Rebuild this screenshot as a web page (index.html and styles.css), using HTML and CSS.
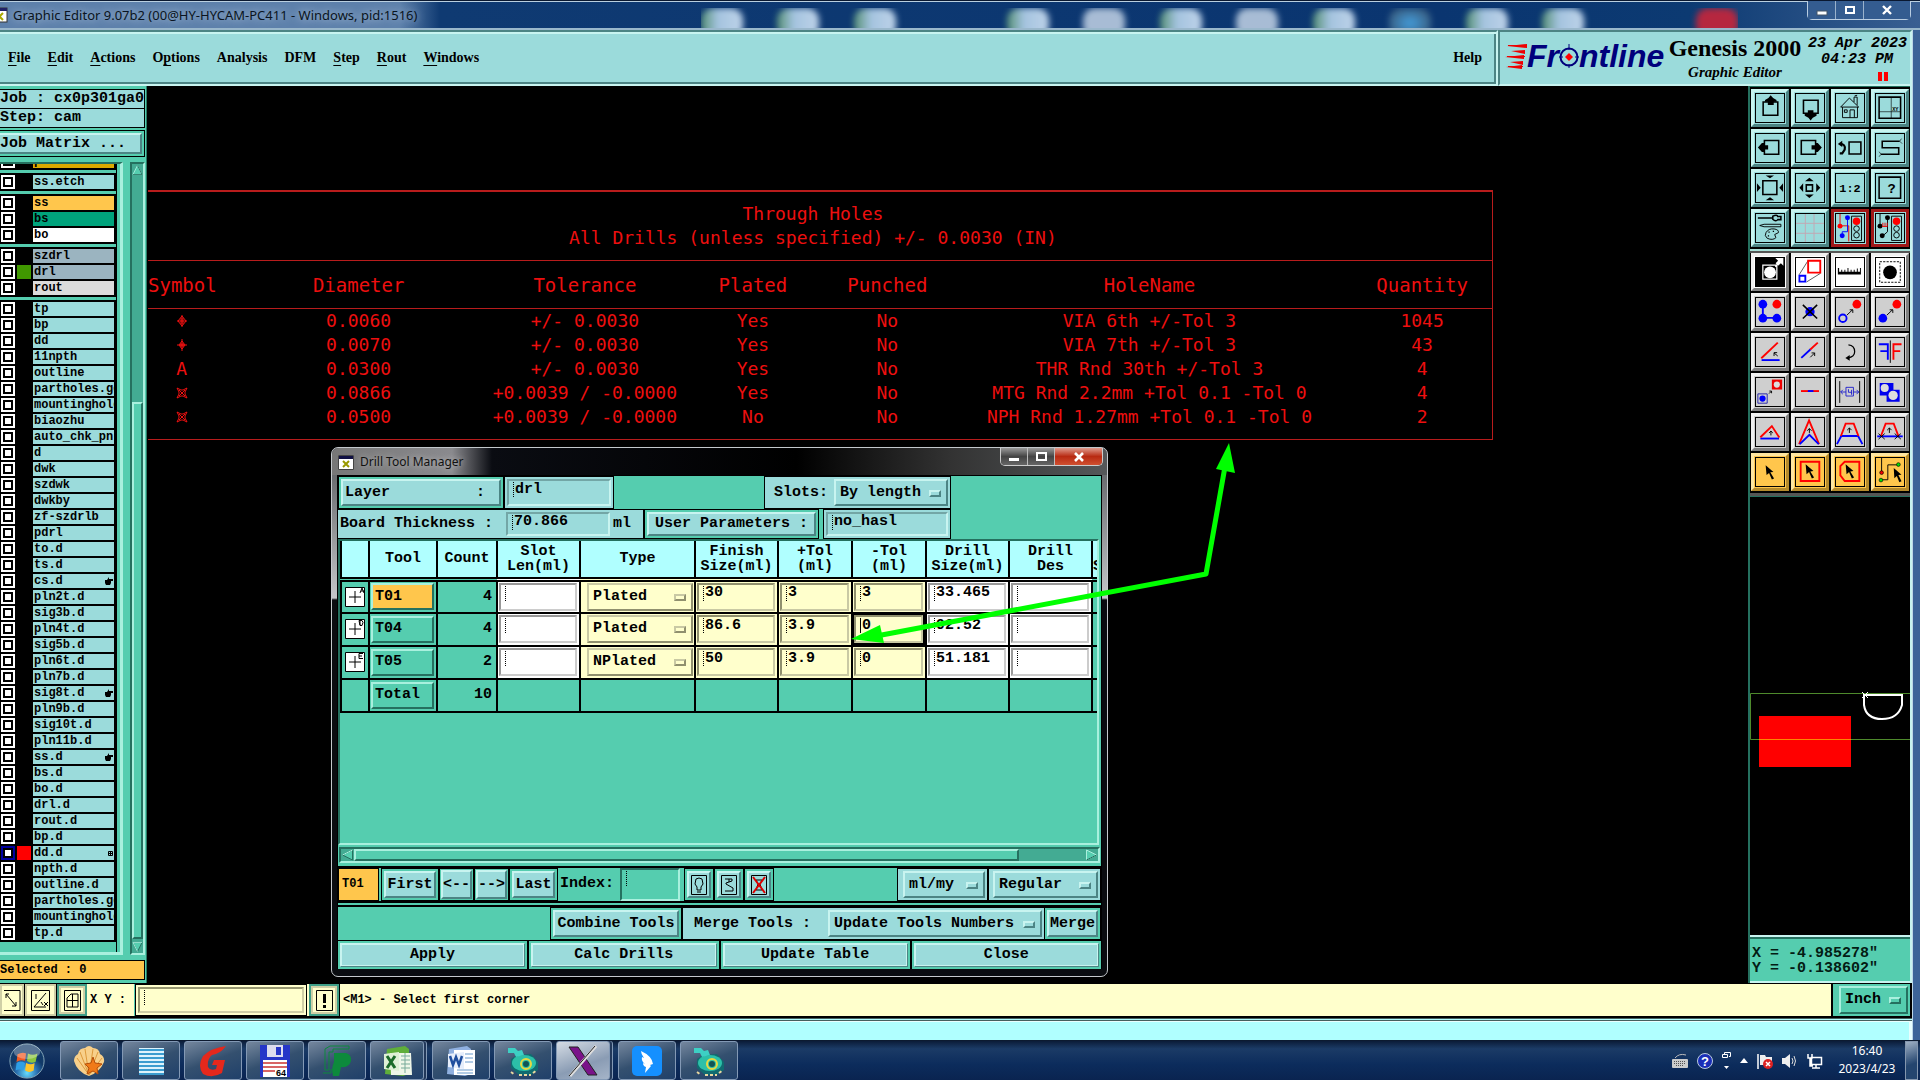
FILE: index.html
```html
<!DOCTYPE html>
<html lang="en">
<head>
<meta charset="utf-8">
<title>Graphic Editor 9.07b2</title>
<link rel="stylesheet" href="styles.css">
</head>
<body>
<header class="titlebar">
  <svg class="xicon" width="16" height="16" viewBox="0 0 16 16"><rect x="0" y="1" width="15" height="14" fill="#fff" stroke="#333"/><rect x="0" y="1" width="15" height="3" fill="#226"/><path d="M4 6l7 7M11 6l-7 7" stroke="#aa0" stroke-width="2"/></svg>
  <h1>Graphic Editor 9.07b2 (00@HY-HYCAM-PC411 - Windows, pid:1516)</h1>
  <div class="blobs"><i></i><i></i><i></i><i class="gap"></i><i></i><i class="doc"></i><i></i><i class="doc"></i><i></i><i class="pic"></i><i></i><i></i><i class="gap"></i><i class="red"></i></div>
  <div class="winbtns">
    <button aria-label="Minimize"><svg width="12" height="12"><rect x="1" y="7" width="10" height="4" fill="#fff" stroke="#456"/></svg></button>
    <button aria-label="Maximize"><svg width="12" height="12"><rect x="2" y="3" width="8" height="6" fill="none" stroke="#fff" stroke-width="2"/></svg></button>
    <button class="wide" aria-label="Close"><svg width="12" height="12"><path d="M2 2l8 8M10 2l-8 8" stroke="#fff" stroke-width="2.4"/></svg></button>
  </div>
</header>

<div class="window">
  <div class="top">
    <nav class="menubar">
      <a href="#"><u>F</u>ile</a><a href="#"><u>E</u>dit</a><a href="#"><u>A</u>ctions</a><a href="#">O<u>p</u>tions</a><a href="#">Analysis</a><a href="#">DFM</a><a href="#"><u>S</u>tep</a><a href="#"><u>R</u>out</a><a href="#"><u>W</u>indows</a><a href="#" class="help">Help</a>
    </nav>
    <div class="brand">
      <div class="logo">
        <svg width="22" height="26" viewBox="0 0 22 26"><g fill="#e00"><path d="M2 3L22 1v4zM6 8L20 7v4zM0 14L19 12v4zM5 19L18 18v4zM1 24L17 22v4z"/><path d="M3 2h19v1H3zM2 13h18v1H2zM3 23h15v1H3z"/></g></svg>
        <span>Fr<svg width="20" height="24" viewBox="0 0 20 24"><circle cx="10" cy="13" r="8.500" fill="none" stroke="#00007c" stroke-width="2"/><path d="M10 0v6M10 20v4M0 13h4M16 13h4" stroke="#00007c"/><path d="M10 9l4 4-4 4-4-4z" fill="#f00"/></svg>ntline</span>
      </div>
      <div class="product"><b>Genesis 2000</b><i>Graphic Editor</i></div>
      <div class="date"><span>23 Apr 2023</span><span>04:23 PM</span><svg width="10" height="9"><path d="M0 0h4v9H0zM6 0h4v9H6z" fill="#f00"/></svg></div>
    </div>
  </div>

  <main class="main">
    <aside class="side">
      <div class="jobbox"><p>Job : cx0p301ga0</p><p>Step: cam</p></div>
      <div class="jobmatrix"><button>Job Matrix ...</button></div>
      <div class="layerpane">
        <div class="layers">
          <ul><li><label><input type="checkbox"><i></i><span class="gold">pln.lib</span></label></li></ul>
          <ul><li><label><input type="checkbox"><i></i><span>ss.etch</span></label></li></ul>
          <ul>
            <li><label><input type="checkbox"><i></i><span class="orange">ss</span></label></li>
            <li><label><input type="checkbox"><i></i><span class="green">bs</span></label></li>
            <li><label><input type="checkbox"><i></i><span class="white">bo</span></label></li>
          </ul>
          <ul>
            <li><label><input type="checkbox"><i></i><span class="steel">szdrl</span></label></li>
            <li><label><input type="checkbox"><i class="on-green"></i><span class="steel">drl</span></label></li>
            <li><label><input type="checkbox"><i></i><span class="silver">rout</span></label></li>
          </ul>
          <ul>
            <li><label><input type="checkbox"><i></i><span>tp</span></label></li>
            <li><label><input type="checkbox"><i></i><span>bp</span></label></li>
            <li><label><input type="checkbox"><i></i><span>dd</span></label></li>
            <li><label><input type="checkbox"><i></i><span>11npth</span></label></li>
            <li><label><input type="checkbox"><i></i><span>outline</span></label></li>
            <li><label><input type="checkbox"><i></i><span>partholes.ge</span></label></li>
            <li><label><input type="checkbox"><i></i><span>mountinghole</span></label></li>
            <li><label><input type="checkbox"><i></i><span>biaozhu</span></label></li>
            <li><label><input type="checkbox"><i></i><span>auto_chk_pnl</span></label></li>
            <li><label><input type="checkbox"><i></i><span>d</span></label></li>
            <li><label><input type="checkbox"><i></i><span>dwk</span></label></li>
            <li><label><input type="checkbox"><i></i><span>szdwk</span></label></li>
            <li><label><input type="checkbox"><i></i><span>dwkby</span></label></li>
            <li><label><input type="checkbox"><i></i><span>zf-szdrlb</span></label></li>
            <li><label><input type="checkbox"><i></i><span>pdrl</span></label></li>
            <li><label><input type="checkbox"><i></i><span>to.d</span></label></li>
            <li><label><input type="checkbox"><i></i><span>ts.d</span></label></li>
            <li><label><input type="checkbox"><i></i><span>cs.d<svg class="hand" viewBox="0 0 8 8"><path d="M0 3h2l2-3v2h4v2H6v2L5 8H1L0 6z"/></svg></span></label></li>
            <li><label><input type="checkbox"><i></i><span>pln2t.d</span></label></li>
            <li><label><input type="checkbox"><i></i><span>sig3b.d</span></label></li>
            <li><label><input type="checkbox"><i></i><span>pln4t.d</span></label></li>
            <li><label><input type="checkbox"><i></i><span>sig5b.d</span></label></li>
            <li><label><input type="checkbox"><i></i><span>pln6t.d</span></label></li>
            <li><label><input type="checkbox"><i></i><span>pln7b.d</span></label></li>
            <li><label><input type="checkbox"><i></i><span>sig8t.d<svg class="hand" viewBox="0 0 8 8"><path d="M0 3h2l2-3v2h4v2H6v2L5 8H1L0 6z"/></svg></span></label></li>
            <li><label><input type="checkbox"><i></i><span>pln9b.d</span></label></li>
            <li><label><input type="checkbox"><i></i><span>sig10t.d</span></label></li>
            <li><label><input type="checkbox"><i></i><span>pln11b.d</span></label></li>
            <li><label><input type="checkbox"><i></i><span>ss.d<svg class="hand" viewBox="0 0 8 8"><path d="M0 3h2l2-3v2h4v2H6v2L5 8H1L0 6z"/></svg></span></label></li>
            <li><label><input type="checkbox"><i></i><span>bs.d</span></label></li>
            <li><label><input type="checkbox"><i></i><span>bo.d</span></label></li>
            <li><label><input type="checkbox"><i></i><span>drl.d</span></label></li>
            <li><label><input type="checkbox"><i></i><span>rout.d</span></label></li>
            <li><label><input type="checkbox"><i></i><span>bp.d</span></label></li>
            <li><label><input type="checkbox" checked><i class="on-red"></i><span>dd.d<svg class="grid5" viewBox="0 0 5 5"><path d="M.5.5h4v4h-4zM2.500 0v5M0 2.500h5" fill="none" stroke="#000"/></svg></span></label></li>
            <li><label><input type="checkbox"><i></i><span>npth.d</span></label></li>
            <li><label><input type="checkbox"><i></i><span>outline.d</span></label></li>
            <li><label><input type="checkbox"><i></i><span>partholes.ge</span></label></li>
            <li><label><input type="checkbox"><i></i><span>mountinghole</span></label></li>
            <li><label><input type="checkbox"><i></i><span>tp.d</span></label></li>
          </ul>
        </div>
        <div class="vscroll">
          <svg viewBox="0 0 12 12"><path d="M6 1l5 10H1z" fill="#55cdaf" stroke="#a9f0de"/><path d="M6 1l5 10H1" fill="none" stroke="#25705f"/></svg>
          <div class="vthumb"></div>
          <svg viewBox="0 0 12 12"><path d="M1 1h10L6 11z" fill="#55cdaf" stroke="#25705f"/><path d="M11 1H1l5 10" fill="none" stroke="#a9f0de"/></svg>
        </div>
      </div>
      <p class="selected">Selected : 0</p>
    </aside>

    <section class="canvas">
      <table class="drills">
        <colgroup><col class="c1"><col class="c2"><col class="c3"><col class="c4"><col class="c5"><col class="c6"><col class="c7"></colgroup>
        <caption>Through Holes<br>All Drills (unless specified) +/- 0.0030 (IN)</caption>
        <thead><tr><th>Symbol</th><th>Diameter</th><th>Tolerance</th><th>Plated</th><th>Punched</th><th>HoleName</th><th>Quantity</th></tr></thead>
        <tbody>
          <tr><td><svg class="sym" viewBox="0 0 12 12"><path d="M6 0v12M1 6h10M6 1L2 6l4 5 4-5zM5 3v6M7 3v6"/></svg></td><td>0.0060</td><td>+/- 0.0030</td><td>Yes</td><td>No</td><td>VIA 6th +/-Tol 3</td><td>1045</td></tr>
          <tr><td><svg class="sym" viewBox="0 0 12 12"><path d="M6 0v12M1 6h10M6 2L3 6l3 4 3-4zM4 6h4M5 4v4M7 4v4"/></svg></td><td>0.0070</td><td>+/- 0.0030</td><td>Yes</td><td>No</td><td>VIA 7th +/-Tol 3</td><td>43</td></tr>
          <tr><td>A</td><td>0.0300</td><td>+/- 0.0030</td><td>Yes</td><td>No</td><td>THR Rnd 30th +/-Tol 3</td><td>4</td></tr>
          <tr><td><svg class="sym" viewBox="0 0 12 12"><path d="M1 1l4 2h2l4-2-2 4v2l2 4-4-2H5l-4 2 2-4V5zM3 3l6 6M9 3L3 9"/></svg></td><td>0.0866</td><td>+0.0039 / -0.0000</td><td>Yes</td><td>No</td><td>MTG Rnd 2.2mm +Tol 0.1 -Tol 0</td><td>4</td></tr>
          <tr><td><svg class="sym" viewBox="0 0 12 12"><path d="M1 1l4 2h2l4-2-2 4v2l2 4-4-2H5l-4 2 2-4V5zM3 3l6 6M9 3L3 9"/></svg></td><td>0.0500</td><td>+0.0039 / -0.0000</td><td>No</td><td>No</td><td>NPH Rnd 1.27mm +Tol 0.1 -Tol 0</td><td>2</td></tr>
        </tbody>
      </table>

      <div class="dialog">
        <div class="dtitle">
          <svg width="16" height="16" viewBox="0 0 16 16"><path d="M.5 1.500h15v14H.5z" fill="#fff" stroke="#444"/><path d="M1 2h14v3H1z" fill="#114"/><path d="M5 7l6 6M11 7l-6 6" stroke="#990" stroke-width="2"/></svg>
          <h2>Drill Tool Manager</h2>
          <div class="dbtns">
            <button aria-label="Minimize"><svg width="12" height="12"><rect x="1" y="7" width="10" height="3" fill="#fff"/></svg></button>
            <button aria-label="Maximize"><svg width="12" height="12"><rect x="2" y="2" width="9" height="7" fill="none" stroke="#fff" stroke-width="2"/></svg></button>
            <button class="close" aria-label="Close"><svg width="12" height="12"><path d="M2 2l8 8M10 2l-8 8" stroke="#fff" stroke-width="2.600"/></svg></button>
          </div>
        </div>
        <div class="dbody">
          <div class="row r1">
            <div class="box gbox layerbox"><button class="btn spread"><span>Layer</span><span>:</span></button></div>
            <div class="box"><input class="field w104" aria-label="Layer" value="drl"></div>
            <div class="box slots"><label for="slots">Slots:</label><span class="opt w114"><select id="slots"><option>By length</option></select></span></div>
          </div>
          <div class="row r2">
            <div class="box thick"><label for="bt">Board Thickness :</label><input id="bt" class="field w104" value="70.866"><span>ml</span></div>
            <div class="box gbox userbox"><button class="btn">User Parameters :</button></div>
            <div class="box"><input class="field w122" aria-label="User Parameters" value="no_hasl"></div>
          </div>
          <div class="view">
            <table class="tools">
              <colgroup><col class="t0"><col class="t1"><col class="t2"><col class="t3"><col class="t4"><col class="t3"><col class="t6"><col class="t6"><col class="t3"><col class="t3"><col class="t2"></colgroup>
              <thead><tr><th></th><th>Tool</th><th>Count</th><th>Slot<br>Len(ml)</th><th>Type</th><th>Finish<br>Size(ml)</th><th>+Tol<br>(ml)</th><th>-Tol<br>(ml)</th><th>Drill<br>Size(ml)</th><th>Drill<br>Des</th><th class="cut"><br>S</th></tr></thead>
              <tbody>
                <tr><td><svg class="plus" viewBox="0 0 20 20"><path d="M.5.500h19v19H.5z"/><path d="M10 4v12M4 10h12"/><path d="M15 6l2-5 2 5M16 4h3"/></svg></td><td><button class="tool cur">T01</button></td><td class="num">4</td><td class="w"><input class="cell" aria-label="Slot length T01"></td><td class="y"><span class="opt"><select aria-label="Type T01"><option>Plated</option></select></span></td><td class="y"><input class="cell" aria-label="Finish size T01" value="30"></td><td class="y"><input class="cell" aria-label="+Tol T01" value="3"></td><td class="y"><input class="cell" aria-label="-Tol T01" value="3"></td><td class="w"><input class="cell" aria-label="Drill size T01" value="33.465"></td><td class="w"><input class="cell" aria-label="Drill designation T01"></td><td></td></tr>
                <tr><td><svg class="plus" viewBox="0 0 20 20"><path d="M.5.500h19v19H.5z"/><path d="M10 4v12M4 10h12"/><path d="M14 1.500h3l1 2-1 3h-2zM15 1v5"/></svg></td><td><button class="tool">T04</button></td><td class="num">4</td><td class="w"><input class="cell" aria-label="Slot length T04"></td><td class="y"><span class="opt"><select aria-label="Type T04"><option>Plated</option></select></span></td><td class="y"><input class="cell" aria-label="Finish size T04" value="86.6"></td><td class="y"><input class="cell" aria-label="+Tol T04" value="3.9"></td><td class="y focus"><input class="cell" aria-label="-Tol T04" value="0"></td><td class="w"><input class="cell" aria-label="Drill size T04" value="92.52"></td><td class="w"><input class="cell" aria-label="Drill designation T04"></td><td></td></tr>
                <tr><td><svg class="plus" viewBox="0 0 20 20"><path d="M.5.500h19v19H.5z"/><path d="M10 4v12M4 10h12"/><path d="M18 1.500h-4v5h4M14 4h3"/></svg></td><td><button class="tool">T05</button></td><td class="num">2</td><td class="w"><input class="cell" aria-label="Slot length T05"></td><td class="y"><span class="opt"><select aria-label="Type T05"><option>NPlated</option></select></span></td><td class="y"><input class="cell" aria-label="Finish size T05" value="50"></td><td class="y"><input class="cell" aria-label="+Tol T05" value="3.9"></td><td class="y"><input class="cell" aria-label="-Tol T05" value="0"></td><td class="w"><input class="cell" aria-label="Drill size T05" value="51.181"></td><td class="w"><input class="cell" aria-label="Drill designation T05"></td><td></td></tr>
                <tr><td></td><td><button class="tool">Total</button></td><td class="num">10</td><td></td><td></td><td></td><td></td><td></td><td></td><td></td><td></td></tr>
              </tbody>
            </table>
          </div>
          <div class="hscroll">
            <svg viewBox="0 0 12 12"><path d="M11 1v10L1 6z" fill="#55cdaf" stroke="#25705f"/><path d="M11 1L1 6" stroke="#a9f0de"/></svg>
            <div class="htrack"><div class="hthumb"></div></div>
            <svg viewBox="0 0 12 12"><path d="M1 1v10l10-5z" fill="#55cdaf" stroke="#a9f0de"/><path d="M1 11l10-5" stroke="#25705f"/></svg>
          </div>
          <div class="row r3">
            <span class="current">T01</span>
            <div class="box gbox n58"><button class="btn">First</button></div>
            <div class="box gbox n35"><button class="btn">&lt;--</button></div>
            <div class="box gbox n35"><button class="btn">--&gt;</button></div>
            <div class="box gbox n49"><button class="btn">Last</button></div>
            <label for="idx">Index:</label><input id="idx" class="field gfield">
            <div class="box gbox ico"><button class="btn" aria-label="Show"><svg viewBox="0 0 16 20"><path d="M.5.500h15v19H.5zM6 15v-3L4 9l1-5 3-1 3 1 1 5-2 3v3zM6 17h4" fill="none" stroke="#000"/></svg></button></div>
            <div class="box gbox ico"><button class="btn" aria-label="Select"><svg viewBox="0 0 16 20"><path d="M.5.500h15v19H.5zM4 4h7v2L5 8v1l7 4v3H4M8 4v3" fill="none" stroke="#000"/></svg></button></div>
            <div class="box gbox ico"><button class="btn" aria-label="Clear"><svg viewBox="0 0 16 20"><path d="M.5.500h15v19H.5zM5 5h6l-2 4 2 6H5l2-6z" fill="none" stroke="#000"/><path d="M2 2l12 16M14 2L2 18" stroke="#d00" stroke-width="2"/></svg></button></div>
            <div class="box push"><span class="opt w82"><select aria-label="Units"><option>ml/my</option></select></span></div>
            <div class="box reg"><span class="opt"><select aria-label="Mode"><option>Regular</option></select></span></div>
          </div>
          <div class="row r4">
            <div class="box gbox combine"><button class="btn">Combine Tools</button></div>
            <div class="box merge"><label for="mt">Merge Tools :</label><span class="opt w214"><select id="mt"><option>Update Tools Numbers</option></select></span></div>
            <div class="box gbox last"><button class="btn">Merge</button></div>
          </div>
          <div class="row r5">
            <button class="btn">Apply</button><button class="btn">Calc Drills</button><button class="btn">Update Table</button><button class="btn">Close</button>
          </div>
        </div>
      </div>

      <svg class="arrow"><path d="M1079 375L1059 488L724 551" fill="none" stroke="#0f0" stroke-width="5" stroke-linejoin="round"/><path d="M1082 357l6 30-19-4zM704 553l29-14 4 18z" fill="#0f0"/></svg>
    </section>

    <aside class="panel">
      <div class="group teal">
        <button aria-label="Pan up"><svg viewBox="0 0 90 90"><path d="M23 26h47v42H23z" class="k5"/><path d="M47 4l8 9 11 6v6h-9v10H38V25h-9v-6l11-6z"/></svg></button>
        <button aria-label="Pan down"><svg viewBox="0 0 90 90"><path d="M24 20h47v42H24z" class="k5"/><path d="M38 52h18v12h10v6l-12 6-7 9-7-9-12-6v-6h10z"/></svg></button>
        <button aria-label="Home"><svg viewBox="0 0 90 90"><path d="M15 42l28-29 30 29zM21 42v34h48V42M45 76V51h14v25M27 51h9v8h-9zM58 26V10h10v25M60 6l8-2" class="k3"/></svg></button>
        <button aria-label="Window"><svg viewBox="0 0 90 90"><path d="M10 10h69v68H10z" class="k5"/><path d="M49 10v68M10 57h69" class="k2"/><text x="52" y="54" font-size="17">XY</text></svg></button>
        <button aria-label="Pan left"><svg viewBox="0 0 90 90"><path d="M27 21h46v44H27z" class="k5"/><path d="M6 43l13-14h8v7h12v14H27v8h-8z"/></svg></button>
        <button aria-label="Pan right"><svg viewBox="0 0 90 90"><path d="M17 21h46v44H17z" class="k5"/><path d="M83 43L70 29h-7v7H50v14h13v8h7z"/></svg></button>
        <button aria-label="Previous view"><svg viewBox="0 0 90 90"><path d="M42 26h38v38H42z" class="k5"/><path d="M12 32q20 0 16 18l-8 12h-8" fill="none" stroke="#000" stroke-width="7"/><path d="M6 32l14-10v20z"/></svg></button>
        <button aria-label="Serpent"><svg viewBox="0 0 90 90"><path d="M76 23H20v21h53v21H16" class="k5"/><path d="M76 23l6-8M76 23l8 8M16 65l-6-8M16 65l-6 8" class="k2"/></svg></button>
        <button aria-label="Zoom out"><svg viewBox="0 0 90 90"><path d="M22 22h45v44H22z" class="k5"/><path d="M31 5h27L45 14zM31 84h27l-13-9zM3 30l12 14L3 58zM87 30L75 44l12 14z"/></svg></button>
        <button aria-label="Zoom in"><svg viewBox="0 0 90 90"><path d="M33 35h20v20H33z" class="k5"/><path d="M29 23h28l-14-11zM29 66h28L43 77zM23 30v28L11 44zM65 30v28l13-14z"/></svg></button>
        <button aria-label="Scale 1:2"><svg viewBox="0 0 90 90"><text x="45" y="58" font-size="38" text-anchor="middle">1:2</text></svg></button>
        <button aria-label="Help"><svg viewBox="0 0 90 90"><path d="M10 10h69v68H10z" class="k5"/><text x="50" y="61" font-size="44" text-anchor="middle">?</text></svg></button>
        <button aria-label="Tools"><svg viewBox="0 0 90 90"><path d="M6 13h48M54 7q14-6 16 1h10v10H70q-6 8-16-1z" class="k5"/><path d="M12 37l14-4h54v8H26zM32 60q8-14 26-12 16 2 14 12l-12 6 4 10q-10 10-28 2-10-8-4-18z" class="k3"/><path d="M40 56h4v4h-4zM54 54h4v4h-4zM38 68h4v4h-4z"/></svg></button>
        <button aria-label="Grid"><svg viewBox="0 0 90 90"><path d="M30 0v90M58 0v90M0 30h90M0 62h90" fill="none" stroke="#c4a6b2" stroke-width="3"/></svg></button>
        <button class="redf" aria-label="Snap"><svg viewBox="0 0 90 90"><path d="M13 0v38h28v50" fill="none" stroke="#e00" stroke-width="3"/><path d="M37 12v45H20v15" fill="none" stroke="#00f" stroke-width="3"/><circle cx="13" cy="39" r="8" fill="#f00"/><circle cx="37" cy="12" r="8" fill="#00f"/><circle cx="20" cy="70" r="8" fill="#00f"/><path d="M50 7h32v78H50z" class="k3"/><circle cx="66" cy="23" r="12" fill="#f00"/><circle cx="66" cy="47" r="9" class="k3"/><circle cx="66" cy="68" r="9" class="k3"/></svg></button>
        <button class="redf" aria-label="Snap off"><svg viewBox="0 0 90 90"><path d="M13 0v38M37 12v45L20 72" class="k3"/><circle cx="13" cy="39" r="8"/><circle cx="37" cy="12" r="8"/><circle cx="20" cy="70" r="8"/><path d="M20 40h16M22 28v12M29 28v12M36 28v12" stroke="#e00" stroke-width="3"/><path d="M50 7h32v78H50z" class="k3"/><circle cx="66" cy="23" r="12" fill="#f00"/><circle cx="66" cy="47" r="9" class="k3"/><circle cx="66" cy="68" r="9" class="k3"/></svg></button>
      </div>
      <div class="group gray">
        <button class="wh" aria-label="Add"><svg viewBox="0 0 90 90"><path d="M0 0h90v90H0z"/><circle cx="45" cy="46" r="19" fill="#fff"/><path d="M22 23h45v45H22zM62 28L80 8" fill="none" stroke="#fff" stroke-width="4"/><path d="M88 0H62l9 9-8 8 8 8 9-8 8 8z" fill="#fff"/></svg></button>
        <button class="wh" aria-label="Copy scale"><svg viewBox="0 0 90 90"><path d="M10 54L39 8M34 77l45-28" class="k2"/><path d="M39 9h39v38H39z" class="red5"/><path d="M11 57h19v19H11z" class="b5"/></svg></button>
        <button class="wh" aria-label="Measure"><svg viewBox="0 0 90 90"><path d="M6 32h4v12h7v-6h3v6h7v-6h3v6h7V32h3v12h7v-6h3v6h7v-6h3v6h7V34h3v10h7V32h3v21H6z"/></svg></button>
        <button class="wh" aria-label="Select feature"><svg viewBox="0 0 90 90"><path d="M12 12h66v66H12z" class="k3" stroke-dasharray="7 4"/><circle cx="45" cy="46" r="22"/></svg></button>
        <button aria-label="Nets"><svg viewBox="0 0 90 90"><path d="M22 20v44h45" class="b5"/><g fill="#00f"><circle cx="22" cy="20" r="14"/><circle cx="22" cy="65" r="14"/><circle cx="67" cy="65" r="14"/></g><circle cx="67" cy="20" r="14" fill="#f00"/></svg></button>
        <button aria-label="Delete"><svg viewBox="0 0 90 90"><circle cx="45" cy="44" r="15" fill="#00f"/><path d="M22 22l46 44M68 22L22 66" class="k5"/></svg></button>
        <button aria-label="Move to"><svg viewBox="0 0 90 90"><circle cx="22" cy="65" r="12" class="b5"/><circle cx="67" cy="20" r="14" fill="#f00"/><path d="M35 55l18-17M44 38h10v10" class="k3"/></svg></button>
        <button aria-label="Copy to"><svg viewBox="0 0 90 90"><circle cx="22" cy="65" r="14" fill="#00f"/><circle cx="67" cy="20" r="14" fill="#f00"/><path d="M35 55l18-17M44 38h10v10" class="k3"/></svg></button>
        <button aria-label="Rotate line"><svg viewBox="0 0 90 90"><path d="M18 71h58" class="b5"/><path d="M17 65l53-50" class="red5"/><path d="M70 58L58 48M58 58V47h10" class="k3"/></svg></button>
        <button aria-label="Extend line"><svg viewBox="0 0 90 90"><path d="M17 64l30-28" class="b5"/><path d="M46 37l24-22" class="red5"/><path d="M46 62l14-14M50 48h10v10" class="k3"/></svg></button>
        <button aria-label="Rotate"><svg viewBox="0 0 90 90"><path d="M40 22q20 2 20 22 0 16-22 20" class="k4"/><path d="M30 64l14-9v18z"/></svg></button>
        <button aria-label="Mirror"><svg viewBox="0 0 90 90"><path d="M9 20h29v50M14 42h24" class="b5"/><path d="M82 20H56v50M56 42h22" class="red5"/><path d="M46 8v72" class="k3"/></svg></button>
        <button aria-label="Transform"><svg viewBox="0 0 90 90"><path d="M6 51h30v30H6z" fill="none" stroke="#22a" stroke-width="3"/><circle cx="21" cy="66" r="10" fill="#00f"/><path d="M51 5h33v32H51z" fill="#e00"/><circle cx="67" cy="21" r="10" fill="#ddd"/><path d="M42 50l7-7M43 42h7v7" class="k3"/></svg></button>
        <button aria-label="Join"><svg viewBox="0 0 90 90"><path d="M16 42h58" class="red5"/><path d="M38 42h18" class="b5"/></svg></button>
        <button aria-label="Spacing"><svg viewBox="0 0 90 90"><path d="M12 10v70M76 10v70" class="k3"/><path d="M32 30h24v28H32zM15 45h17M56 45h17M22 38l-7 7 7 7M66 38l7 7-7 7M40 36v10h10v8M50 38v12" fill="none" stroke="#22c" stroke-width="3"/></svg></button>
        <button aria-label="Merge shapes"><svg viewBox="0 0 90 90"><path d="M12 16h44v22h20v38H34V56H12z" fill="#00e"/><circle cx="28" cy="32" r="13" fill="#ddd"/><circle cx="55" cy="56" r="15" fill="#ddd"/></svg></button>
        <button aria-label="Corner"><svg viewBox="0 0 90 90"><path d="M14 66h60" class="b5"/><path d="M14 62l37-36 24 37" class="red5"/><path d="M48 56V42M42 48l6-6 6 6" class="k3"/></svg></button>
        <button aria-label="Stretch corner"><svg viewBox="0 0 90 90"><path d="M10 84L42 8l32 76" class="red5"/><path d="M12 84l31-30 30 30" class="b5"/><path d="M43 48V34M36 41l7-7 7 7" class="k3"/></svg></button>
        <button aria-label="Stretch edge"><svg viewBox="0 0 90 90"><path d="M3 84l14-26h54l14 26" class="b5"/><path d="M16 58l15-40h26l15 40" class="red5"/><path d="M43 48V32M36 39l7-7 7 7" class="k3"/></svg></button>
        <button aria-label="Cut edge"><svg viewBox="0 0 90 90"><path d="M4 59h82" class="b5"/><path d="M16 58l15-40h26l15 40" class="red5"/><path d="M43 48V32M36 39l7-7 7 7M8 50l20 18M28 50L8 68M60 50l20 18M80 50L60 68" class="k3"/></svg></button>
        <button class="or" aria-label="Select"><svg viewBox="0 0 90 90"><path d="M31 23l25 22-10 1 12 20-7 3-9-21-8 7z"/></svg></button>
        <button class="or" aria-label="Frame select"><svg viewBox="0 0 90 90"><path d="M15 12h60v62H15z" class="red5"/><path d="M31 20l25 22-10 1 12 20-7 3-9-21-8 7z"/></svg></button>
        <button class="or" aria-label="Polygon select"><svg viewBox="0 0 90 90"><path d="M28 12h47v62H28L14 56V26z" class="red5"/><path d="M31 20l25 22-10 1 12 20-7 3-9-21-8 7z"/></svg></button>
        <button class="or" aria-label="Net select"><svg viewBox="0 0 90 90"><path d="M18 0v46M16 70h22V22h34" class="k3"/><circle cx="18" cy="47" r="6" fill="#e00" stroke="#000" stroke-width="2"/><circle cx="16" cy="71" r="6" fill="#0d0" stroke="#000" stroke-width="2"/><circle cx="72" cy="21" r="6" fill="#0d0" stroke="#000" stroke-width="2"/><path d="M57 32l25 22-10 1 10 20-7 3-8-20-8 7z"/></svg></button>
      </div>
      <div class="minimap"><svg><path d="M9 219h92v51H9z" fill="#f00"/><path d="M160 196.500H.5v46H160" fill="none" stroke="#4e8a2c"/><path d="M9 242.500h92" stroke="#f80"/><path d="M114 198h38v10q-4 14-20 14t-18-14z" fill="none" stroke="#fff" stroke-width="2"/><path d="M112 195l6 6M118 195l-6 6" stroke="#fff"/></svg></div>
      <div class="coords"><p>X = -4.985278"</p><p>Y = -0.138602"</p></div>
    </aside>
  </main>

  <div class="status">
    <button class="sb" aria-label="Diagonal"><svg viewBox="0 0 17 21"><path d="M-2 .5h18v20H-2M2 4l10 12M2 8V4h3M8 16h4v-4" fill="none" stroke="#000"/></svg></button>
    <button class="sb s2" aria-label="Angle"><svg viewBox="0 0 19 21"><path d="M.5.500h18v20H.5zM3 17L15 3M3 17h12M5 4v5M10 12l2 3M13 12l4 4M17 12l-4 4" fill="none" stroke="#000"/></svg></button>
    <button class="sb sg" aria-label="Grid"><svg viewBox="0 0 17 21"><path d="M.5.500h16v20H.5zM3 8l4-4h7v13H3zM8.500 4v13M3 10.500h11" fill="none" stroke="#000"/></svg></button>
    <label for="xy">X Y :</label>
    <div class="xybox"><input id="xy" class="field"></div>
    <button class="sb sg" aria-label="Alert"><svg viewBox="0 0 17 21"><path d="M.5.500h16v20H.5z" fill="none" stroke="#000"/><path d="M7 4h3v9H7zM7 15h3v3H7z"/></svg></button>
    <p class="msg">&lt;M1&gt; - Select first corner</p>
    <div class="units"><span class="opt"><select aria-label="Units"><option>Inch</option></select></span></div>
  </div>
  <div class="foot"></div>
</div>

<footer class="taskbar">
  <button class="start" aria-label="Start"><svg viewBox="0 0 40 40"><defs><radialGradient id="orb" cy=".85"><stop offset="0" stop-color="#6df"/><stop offset=".6" stop-color="#2a6fb0"/><stop offset="1" stop-color="#123a68"/></radialGradient></defs><circle cx="20" cy="20" r="18" fill="url(#orb)" stroke="#8ab"/><path d="M10 13q5-3 9-1l-1 8q-5-2-9 1z" fill="#f25a22"/><path d="M21 12q5 3 10 0l-2 9q-5 2-9-1z" fill="#8cc63f"/><path d="M9 22q4-3 9 0l-2 8q-4-2-8 0z" fill="#2e9fe6"/><path d="M19 22q5 3 9 0l-1 8q-5 3-9 0z" fill="#fdc52a"/><ellipse cx="20" cy="10" rx="14" ry="8" fill="#fff" opacity=".3"/></svg></button>
  <button class="task" aria-label="Shell"><svg viewBox="0 0 32 32"><path d="M16 31Q4 27 1 16q0-5 4-7 1-6 7-6 4-4 8 0 6 0 7 6 5 3 4 8-4 10-15 14z" fill="#f8d08a"/><path d="M16 30L4 13M16 30L7 7M16 30L12 4M16 30l4-26M16 30l9-23M16 30L29 13" stroke="#dd9a3c"/><path d="M20 12l2 6 7 1-5 4 1 6-5-3-6 3 2-6-4-4 6-1z" fill="#f07a18" stroke="#b54e08"/></svg></button>
  <button class="task" aria-label="Notepad"><svg viewBox="0 0 32 32"><path d="M4 3h25v27H4z" fill="#def3fc"/><path d="M4 5h25M4 9h25M4 13h25M4 17h25M4 21h25M4 25h25M4 29h25" stroke="#3b9ccf" stroke-width="2"/></svg></button>
  <button class="task" aria-label="Genesis"><svg viewBox="0 0 32 32"><path d="M29 1q-6 8-14 9-5 4-4 12 2 4 8 2l1-4h-5l2-5h11l-3 13q-10 6-19 1-6-8 0-18Q14 3 29 1z" fill="#e5281c"/></svg></button>
  <button class="task" aria-label="Save 64"><svg viewBox="0 0 32 32"><path d="M1 0h30v32H1z" fill="#2636c8"/><path d="M8 0h16v12H8z" fill="#dde"/><path d="M17 2h5v8h-5z" fill="#2636c8"/><path d="M4 15h24v17H4z" fill="#fff"/><path d="M4 18h24M4 22h24M4 26h12" stroke="#c33" stroke-width="1.500"/><text x="17" y="31" font-size="9">64</text></svg></button>
  <button class="task" aria-label="P editor"><svg viewBox="0 0 32 32"><path d="M4 22V4L9 1h19v3H12v3H8v18H4zM2 28h8v-4" stroke="#0d8a3c" fill="none"/><path d="M12 31q-2-8 1-14V8h12q6 2 5 8-2 7-10 6l-2 9z" fill="#0d8a3c"/></svg></button>
  <button class="task stack" aria-label="Excel"><svg viewBox="0 0 32 32"><path d="M6 4l18-3 4 3v25l-6 2-18-2z" fill="#5fae3a"/><path d="M9 8h21l1 22H10z" fill="#eef6e8"/><path d="M20 11h9M20 15h9M20 19h9M20 23h9M24 8v20" stroke="#7a9"/><path d="M3 9l15-2v19L3 24z" fill="#dff0d6"/><path d="M6 11l8 12M14 11L6 23" stroke="#1c6b2a" stroke-width="3"/></svg></button>
  <button class="task" aria-label="Word"><svg viewBox="0 0 32 32"><path d="M4 4l18-3 4 3v25l-6 2-18-2z" fill="#8fb0e0"/><path d="M9 5h21v25H9z" fill="#fff"/><path d="M20 9h8M20 13h8M20 17h8M12 25h16M12 28h16" stroke="#69c"/><path d="M3 9l16-2v17L3 22z" fill="#e6eefb"/><path d="M5 11l3 9 3-8 3 8 3-9" fill="none" stroke="#1f4e9e" stroke-width="2.500"/></svg></button>
  <button class="task" aria-label="CAM viewer"><svg viewBox="0 0 32 32"><path d="M4 14l6-4 14-1 7 8v8l-7 5H12l-8-7z" fill="#116b70"/><ellipse cx="17" cy="18" rx="12" ry="8" fill="#2cc0a8"/><circle cx="19" cy="19" r="5" fill="none" stroke="#e8d840" stroke-width="2"/><circle cx="19" cy="19" r="3" fill="#155"/><path d="M1 3h7l3 3 4-1 2 5-8 2-2-4H1z" fill="#3dd0c4"/><path d="M4 27l4 3M12 30h12M26 28l4-3" stroke="#e9d8a0" stroke-width="2" stroke-dasharray="3 2"/></svg></button>
  <button class="task active stack" aria-label="X server"><svg viewBox="0 0 32 32"><path d="M2 2h9l19 28h-9z" fill="#7a1289" stroke="#222"/><path d="M29 1L3 31" stroke="#ddd" stroke-width="3"/><path d="M28 1L2 31" stroke="#222"/></svg></button>
  <button class="task" aria-label="Bird"><svg viewBox="0 0 32 32"><rect x="1" y="1" width="30" height="30" rx="5" fill="#1590ff"/><path d="M10 6q11 5 12 13l-3 1 1 1-6 7 1-6q-3-1-3-4l2 1q-4-3-3-7l2 1q-3-4-3-7z" fill="#fff"/></svg></button>
  <button class="task" aria-label="CAM viewer 2"><svg viewBox="0 0 32 32"><path d="M4 14l6-4 14-1 7 8v8l-7 5H12l-8-7z" fill="#116b70"/><ellipse cx="17" cy="18" rx="12" ry="8" fill="#2cc0a8"/><circle cx="19" cy="19" r="5" fill="none" stroke="#e8d840" stroke-width="2"/><circle cx="19" cy="19" r="3" fill="#155"/><path d="M1 3h7l3 3 4-1 2 5-8 2-2-4H1z" fill="#3dd0c4"/><path d="M4 27l4 3M12 30h12M26 28l4-3" stroke="#e9d8a0" stroke-width="2" stroke-dasharray="3 2"/></svg></button>
  <div class="tray">
    <svg width="16" height="16" viewBox="0 0 16 16"><path d="M3 5q4-5 11-3" fill="none" stroke="#bbb"/><rect x="0" y="6" width="16" height="9" rx="1" fill="#ccc"/><path d="M2 8.500h12M2 10.500h12M4 12.500h8" stroke="#555" stroke-dasharray="1 1"/></svg>
    <svg width="16" height="16" viewBox="0 0 16 16"><circle cx="8" cy="8" r="7.500" fill="#1a2fb8" stroke="#bcd"/><text x="8" y="13" font-size="13" font-weight="700" fill="#fff" text-anchor="middle">?</text></svg>
    <svg width="9" height="18" viewBox="0 0 9 18"><path d="M2.500 2V.5h6v4H7M.5 2.500h5v3h-5z" fill="none" stroke="#fff"/><path d="M2 14h5l-2.500 3z" fill="#fff"/></svg>
    <svg width="8" height="5" viewBox="0 0 8 5"><path d="M4 0l4 5H0z" fill="#fff"/></svg>
    <svg width="16" height="16" viewBox="0 0 16 16"><path d="M1 1v15" stroke="#fff" stroke-width="1.500"/><path d="M3 2h5l1 2h6v8H3z" fill="#eee"/><circle cx="11" cy="11" r="5" fill="#d22"/><path d="M9 9l4 4M13 9l-4 4" stroke="#fff" stroke-width="1.500"/></svg>
    <svg width="16" height="16" viewBox="0 0 16 16"><path d="M0 5h3l5-4v14l-5-4H0z" fill="#eee"/><path d="M10 5q2 3 0 6M12 3q3 5 0 10" fill="none" stroke="#ddd"/></svg>
    <svg width="16" height="16" viewBox="0 0 16 16"><path d="M4.500 4.500h10v7h-10zM9 12v3M5 15h8M1 1v4h4V1M3 5v8h3" fill="none" stroke="#fff" stroke-width="1.500"/></svg>
  </div>
  <div class="clock"><span>16:40</span><span>2023/4/23</span></div>
  <button class="desk" aria-label="Show desktop"></button>
</footer>
</body>
</html>
```
FILE: styles.css
```css
:root {
  --cyan: #9bdbdb;
  --green: #55cdaf;
  --yellow: #ffffcc;
  --orange: #ffc64c;
  --hi: #c8f4f0;
  --lo: #4c8484;
}
*, *::after { box-sizing: border-box; margin: 0; padding: 0; }
body {
  display: flex; flex-direction: column; min-height: 100vh;
  background: linear-gradient(90deg, #0c3a72, #3d6499);
  font: bold 15px/16px "Liberation Mono", monospace; color: #000;
}
button, input, select { font: inherit; color: inherit; border: 0; background: none; border-radius: 0; outline: 0; }
select { appearance: none; width: 100%; line-height: 18px; }
svg { display: block; flex: none; }
ul { list-style: none; }

/* title bar */
.titlebar {
  position: relative; display: flex; align-items: center; height: 30px;
  background: linear-gradient(90deg, #5d80ab 0, #5d80ab 400px, #0f3a72 440px, #0a3570 75%, #0c3a72 88%, #3a5f92);
  border-top: 1px solid #0a1830; border-bottom: 2px solid #9ab8cc; box-shadow: inset 0 1px #b9cfe0;
}
.xicon { margin-left: -8px; }
.titlebar h1 { margin-left: 5px; font: 13px/20px "Noto Sans", sans-serif; color: #0a1420; text-shadow: 0 0 8px #c8d8ea; white-space: nowrap; }
.blobs { position: absolute; left: 36.5%; right: 9.5%; top: 7px; bottom: 0; display: flex; justify-content: space-between; overflow: hidden; }
.blobs i { width: 42px; height: 30px; border-radius: 12px; background: linear-gradient(90deg, #5e9a74 0, #b5d3ec 40%, #d2e4f6); filter: blur(3px); opacity: .9; }
.blobs .doc { background: #b9cbe0; }
.blobs .pic { background: radial-gradient(#4aa9e8, #3a4a60); }
.blobs .gap { opacity: 0; }
.blobs .red { background: #c8253a; }
.winbtns { position: relative; display: flex; align-self: flex-start; margin: 0 9px 0 auto; border: 1px solid #b9cde2; border-top: 0; border-radius: 0 0 5px 5px; }
.winbtns button { width: 28px; height: 18px; display: flex; align-items: center; justify-content: center; border-right: 1px solid #9ab2cc; background: #345c90; }
.winbtns .wide { width: 46px; border: 0; }

.window { flex: 1; display: flex; flex-direction: column; margin-right: 8px; background: #000; box-shadow: 1px 0 #bcd6e8; }

/* menu and brand */
.top { display: flex; height: 56px; background: var(--cyan); }
.menubar, .brand { border: 2px solid; border-color: var(--lo) var(--hi) var(--hi) var(--lo); }
.menubar { flex: 1; display: flex; align-items: center; gap: 17px; padding: 0 14px 0 8px; border-left: 0; box-shadow: inset 0 2px var(--hi), inset -2px -2px var(--lo); }
.menubar a { font: bold 14px/18px "Liberation Serif", serif; color: #000; text-decoration: none; }
.menubar u { text-underline-offset: 3px; }
.menubar .help { margin-left: auto; }
.brand { display: flex; width: 414px; padding: 4px 3px 0 5px; }
.logo { display: flex; align-items: center; width: 162px; height: 40px; }
.logo span { display: flex; align-items: center; font: italic bold 32px/36px "Liberation Sans", sans-serif; color: #00007c; }
.product { display: flex; flex-direction: column; align-items: center; width: 136px; }
.product b { font: bold 24px/24px "Liberation Serif", serif; }
.product i { margin-top: 2px; font: italic bold 15px/20px "Liberation Serif", serif; }
.date { position: relative; flex: 1; display: flex; flex-direction: column; align-items: flex-end; font-style: italic; }
.date span + span { margin-right: 14px; }
.date svg { margin: 4px 19px 0 0; }

.main { flex: 1; display: flex; }

/* left side */
.side { display: flex; flex-direction: column; width: 147px; padding: 3px 2px 3px 0; background: var(--green); box-shadow: inset -1px 0 #2a7a66; }
.jobbox { border: 1px solid #000; border-left: 0; background: #000; }
.jobbox p { height: 18px; line-height: 18px; background: var(--cyan); white-space: pre; }
.jobbox p + p { margin-top: 1px; }
.jobmatrix { margin-top: 2px; border: 1px solid #000; border-left: 0; padding: 2px 2px 2px 0; }
.jobmatrix button { display: block; width: 100%; height: 21px; text-align: left; background: var(--cyan); border: 2px solid; border-color: var(--hi) var(--lo) var(--lo) var(--hi); border-left: 0; }
.layerpane { flex: 1; display: flex; margin-top: 5px; gap: 7px; }
.layers { flex: 1; overflow: hidden; border-top: 2px solid #25705f; border-right: 3px solid #a9f0de; border-bottom: 3px solid #a9f0de; background: linear-gradient(#000, #000) right 3px top / 1px 100% no-repeat; }
.layers ul { width: 116px; background: #000; padding: 2px 2px 0 1px; margin-bottom: 3px; }
.layers ul:first-child { margin-top: -12px; }
.layers label { display: flex; gap: 2px; padding-bottom: 2px; height: 16px; }
.layers input { appearance: none; flex: none; width: 14px; height: 14px; background: #fff; box-shadow: inset 0 0 0 2px #fff, inset 0 0 0 4px #000; }
.layers input:checked { box-shadow: inset 0 0 0 2px #0000a0, inset 0 0 0 4px #000; }
.layers i { flex: none; width: 14px; height: 14px; background: #000; }
.layers span { flex: 1; display: flex; align-items: center; justify-content: space-between; overflow: hidden; padding: 0 1px; font-size: 12px; line-height: 14px; background: var(--cyan); white-space: nowrap; }
.layers .gold { background: #dcaa00; }
.layers .orange { background: var(--orange); }
.layers .green { background: #00a37c; }
.layers .white { background: #fff; }
.layers .steel { background: #9bb4c0; }
.layers .silver { background: #dcdcdc; }
.layers .on-green { background: #409800; }
.layers .on-red { background: #f00; }
.hand { width: 8px; height: 8px; }
.grid5 { width: 5px; height: 5px; }
.vscroll { display: flex; flex-direction: column; width: 15px; border: 2px solid; border-color: #25705f #a9f0de #a9f0de #25705f; background: #43ab93; }
.vscroll svg { width: 11px; height: 12px; }
.vthumb { height: 68%; margin-top: auto; margin-bottom: 2px; background: var(--green); border: 2px solid; border-color: #a9f0de #25705f #25705f #a9f0de; }
.selected { margin-top: 5px; height: 20px; line-height: 18px; font-size: 12px; background: var(--orange); border: 1px solid #000; border-left: 0; }

/* canvas */
.canvas { position: relative; flex: 1; background: #000; }
.drills { position: absolute; left: 1px; top: 104px; width: 84%; table-layout: fixed; border-collapse: collapse; font: 18px/24px "DejaVu Sans Mono", monospace; color: #ee0f0f; border: 1px solid #b81c1c; border-left: 0; }
.drills caption { padding: 10px 14px 10px 0; line-height: 24px; border-top: 2px solid #b81c1c; border-right: 1px solid #b81c1c; }
.drills th { height: 48px; font-weight: 400; font-size: 19px; border-bottom: 1px solid #b81c1c; }
.drills td { height: 24px; text-align: center; white-space: nowrap; }
.drills tbody::after { content: ""; display: block; height: 10px; }
.drills tr > :nth-child(2) { padding-left: 18px; }
.drills tr > :nth-child(7) { padding-left: 8px; }
.c1 { width: 5%; } .c2 { width: 20%; } .c3 { width: 15%; } .c4 { width: 10%; } .c5 { width: 10%; } .c6 { width: 29%; } .c7 { width: 11%; }
.sym { width: 12px; height: 12px; margin: 0 auto; fill: none; stroke: #f01010; }
.arrow { position: absolute; left: 0; top: 0; width: 100%; height: 100%; pointer-events: none; }

/* dialog window */
.dialog { position: absolute; left: 184px; top: 361px; width: 777px; padding: 0 5px 7px; border: 1px solid #c4c8cc; border-radius: 7px; background: linear-gradient(#55585c, #c4c6c8 150px, #0a0c10 152px); }
.dtitle { display: flex; height: 27px; margin: 0 -5px; padding-left: 6px; align-items: center; border-radius: 7px 7px 0 0; background: linear-gradient(90deg, #777 0, #8a8a8e 120px, #0a0c12 160px, #000 60%, #333 80%, #55585a); }
.dtitle h2 { margin-left: 6px; font: 12px/18px "Noto Sans", sans-serif; color: #111; text-shadow: 0 0 6px #ccc; }
.dbtns { display: flex; align-self: flex-start; margin: 0 4px 0 auto; border: 1px solid #ccc; border-top: 0; border-radius: 0 0 5px 5px; overflow: hidden; }
.dbtns button { display: flex; align-items: center; justify-content: center; width: 27px; height: 17px; border-right: 1px solid #bbb; background: linear-gradient(#999, #444 50%, #666); }
.dbtns .close { width: 47px; border: 0; background: linear-gradient(#e09a8c, #b82a12 50%, #d05030); }
.dbody { background: var(--green); border: 1px solid #000; border-bottom: 0; }
.row { display: flex; }
.box { display: flex; align-items: center; padding: 2px; background: var(--cyan); border: 1px solid #000; }
.gbox { background: var(--green); }
.btn { display: block; width: 100%; height: 100%; background: var(--cyan); border: 2px solid; border-color: var(--hi) var(--lo) var(--lo) var(--hi); white-space: nowrap; }
.field, .cell { display: block; border: 2px solid; border-color: #73a6a6 var(--hi) var(--hi) #73a6a6; }
.field { height: 100%; padding: 0 0 6px 6px; background: repeating-linear-gradient(#000 0 1px, transparent 1px 2px) 4px 1px / 1px 15px no-repeat; }
.opt { position: relative; display: flex; align-items: center; height: 100%; padding: 0 4px; border: 2px solid; border-color: var(--hi) var(--lo) var(--lo) var(--hi); }
.opt::after { content: ""; position: absolute; right: 5px; top: 50%; margin-top: -3px; width: 12px; height: 7px; border: 2px solid; border-color: var(--hi) var(--lo) var(--lo) var(--hi); pointer-events: none; }
.r1 { height: 33px; }
.r2 { height: 30px; }
.layerbox { width: 166px; }
.spread { display: flex; justify-content: space-between; align-items: center; padding: 0 14px 0 2px; }
.w104 { width: 104px; } .w114 { width: 114px; } .w122 { width: 122px; } .w82 { width: 82px; } .w214 { width: 214px; }
.slots { margin-left: 150px; gap: 6px; padding-left: 9px; }
.thick { width: 306px; border-left: 0; }
.thick .field { margin-left: 13px; }
.thick span { margin-left: 3px; }
.userbox { width: 175px; }
.userbox + .box { margin-left: 4px; }
.view { height: 306px; margin-right: 2px; overflow: hidden; border: 2px solid; border-color: #25705f #a9f0de #a9f0de #25705f; }
.tools { width: 804px; table-layout: fixed; border-collapse: collapse; }
.tools th, .tools td { border: 2px solid #000; }
.tools th { height: 38px; background: #b0ffff; border-top: 0; border-bottom: 5px double #000; line-height: 15px; }
.tools .cut { text-align: left; }
.tools td { height: 33px; padding: 1px; }
.t0 { width: 28px; } .t1 { width: 68px; } .t2 { width: 60px; } .t3 { width: 83px; } .t4 { width: 115px; } .t6 { width: 74px; }
.tools .num { text-align: right; padding-right: 4px; }
.tools .w { background: #fff; --hi: #ccc; --lo: #999; }
.tools .y { background: var(--yellow); --hi: #c9c9a4; --lo: #90906e; }
.tools .cell { width: calc(100% - 1px); height: 28px; padding: 0 0 8px 6px; border-color: var(--lo) var(--hi) var(--hi) var(--lo); background: repeating-linear-gradient(#000 0 1px, transparent 1px 2px) 4px 1px / 1px 15px no-repeat; }
.tools .focus { box-shadow: inset 0 0 0 2px #000; }
.tools .focus .cell { background-image: linear-gradient(#000, #000); }
.tools .opt { height: 28px; margin-left: 5px; }
.tool { display: block; width: 63px; height: 27px; padding-left: 2px; text-align: left; border: 2px solid; border-color: #a9f0de #25705f #25705f #a9f0de; }
.cur { background: var(--orange); }
.plus { width: 20px; height: 20px; margin: 0 auto; fill: #fff; stroke: #000; stroke-width: 1; }
.hscroll { display: flex; align-items: center; height: 16px; margin: 2px 1px 3px; border: 2px solid; border-color: #25705f #a9f0de #a9f0de #25705f; background: #43ab93; }
.hscroll svg { width: 13px; height: 12px; }
.htrack { flex: 1; height: 100%; }
.hthumb { width: 91%; height: 100%; background: var(--green); border: 2px solid; border-color: #a9f0de #25705f #25705f #a9f0de; }
.r3 { height: 37px; align-items: stretch; border-top: 2px solid #000; border-bottom: 2px solid #000; }
.current { width: 41px; margin-right: 2px; padding-left: 3px; line-height: 30px; font-size: 12px; background: var(--orange); border: 1px solid #000; }
.n58 { width: 58px; } .n35 { width: 35px; padding: 1px; } .n49 { width: 49px; }
.r3 label { padding: 0 6px 0 2px; line-height: 32px; }
.gfield { width: 60px; margin-right: 4px; --hi: #a9f0de; border-color: #25705f #a9f0de #a9f0de #25705f; }
.ico { width: 30px; }
.ico svg { width: 16px; height: 20px; margin: 0 auto; }
.push { margin-left: auto; padding-left: 5px; }
.reg { width: 113px; padding-left: 4px; }
.reg .opt { width: 100%; }
.r4 { height: 36px; margin-top: 2px; border-top: 2px solid #000; border-bottom: 1px solid #000; justify-content: flex-end; }
.combine { width: 132px; }
.merge { gap: 17px; padding-left: 11px; border-right: 0; }
.last { width: 57px; }
.r5 { height: 28px; gap: 2px; background: #000; }
.r5 .btn { box-shadow: inset 0 0 0 1px var(--hi); outline: 2px solid var(--green); outline-offset: -2px; border-width: 3px; }

/* right panel */
.panel { display: flex; flex-direction: column; width: 164px; border-left: 2px solid #25705f; border-right: 2px solid #c8f4f0; background: #000; }
.group { display: grid; grid-template-columns: repeat(4, 38px); gap: 2px; padding: 2px 1px; }
.teal { --bg: var(--cyan); border-top: 1px solid #25705f; border-bottom: 2px solid #a9e0d8; }
.gray { --bg: #cfcfcf; --hi: #f0f0f0; --lo: #808080; padding-top: 0; border-top: 2px solid #555; border-bottom: 3px solid #555; }
.group button { display: flex; align-items: center; justify-content: center; width: 38px; height: 38px; background: var(--bg); border: 3px solid; border-color: var(--hi) var(--lo) var(--lo) var(--hi); }
.group svg { width: 30px; height: 30px; border: 1px solid #000; font: bold 20px "Liberation Mono", monospace; }
.group .wh { background: #fff; }
.group .or { background: var(--orange); --hi: #ffe6a0; --lo: #b58a2c; }
.group .redf { border-color: #a01818; background: var(--cyan); }
.k2, .k3, .k4, .k5 { fill: none; stroke: #000; }
.k2 { stroke-width: 2px; } .k3 { stroke-width: 3px; } .k4 { stroke-width: 4px; } .k5 { stroke-width: 5px; }
.red5 { fill: none; stroke: #f00; stroke-width: 6px; }
.b5 { fill: none; stroke: #00f; stroke-width: 6px; }
.minimap { flex: 1; border-top: 1px solid #25705f; border-bottom: 2px solid #c8f4f0; }
.minimap svg { width: 100%; height: 100%; }
.coords { height: 46px; padding: 7px 0 0 2px; line-height: 15px; background: var(--green); border-top: 2px solid #25705f; border-bottom: 2px solid #c8f4f0; color: #041c14; }

/* status line */
.status { display: flex; height: 35px; background: var(--yellow); border-top: 1px solid #000; border-bottom: 2px solid #000; --hi: #ffffe8; --lo: #96966f; }
.sb { display: flex; align-items: center; width: 25px; padding-right: 3px; justify-content: flex-end; border-right: 1px solid #000; box-shadow: inset 0 0 0 2px #cfcfa6; }
.s2 { width: 32px; padding: 0; justify-content: center; }
.sg { width: 30px; padding: 0; justify-content: center; border: 2px solid #3f9f88; box-shadow: inset 0 0 0 2px #cfcfa6; }
.sb svg { height: 21px; width: 17px; }
.s2 svg { width: 19px; }
.status label, .msg { font-size: 12px; line-height: 32px; }
.status label { width: 48px; padding-left: 3px; border-right: 1px solid var(--green); }
.xybox { width: 172px; padding: 2px; border: 1px solid #000; margin-right: 2px; }
.xybox .field { width: 100%; border-color: var(--lo) #cfcfa6 #cfcfa6 var(--lo); }
.msg { flex: 1; padding-left: 3px; border-left: 1px solid #000; border-right: 2px solid #000; }
.units { width: 79px; padding: 2px 2px 2px 6px; background: var(--green); --hi: #a9f0de; --lo: #25705f; border-right: 2px solid #000; }
.foot { height: 22px; background: #b0ffff; border-top: 3px double #46605f; box-shadow: inset -3px 1px #e8ffff; }

/* taskbar */
.taskbar { display: flex; align-items: stretch; height: 40px; gap: 4px; padding-left: 8px; border-top: 1px solid #0c1a30; background: linear-gradient(#0b1c38 0, #1b3b66 20%, #0c2c5c 60%, #0a2450); }
.start { width: 38px; margin-right: 10px; }
.start svg { width: 38px; height: 38px; }
.task { display: flex; align-items: center; justify-content: center; width: 58px; border: 1px solid #8399b5; border-radius: 3px; background: linear-gradient(160deg, #75879e, #34506f 50%, #20406a); }
.task svg { width: 32px; height: 32px; font: 700 9px "Liberation Sans", sans-serif; }
.stack { width: 54px; margin-right: 4px; box-shadow: 2px 0 #22385a, 3px 0 #8399b5; }
.active { background: linear-gradient(160deg, #d5dce4, #8a9cb4 60%, #a5b4c8); }
.tray { display: flex; align-items: center; gap: 9px; margin: 0 6px 0 auto; }
.tray svg { font-family: "Liberation Sans", sans-serif; }
.clock { display: flex; flex-direction: column; align-items: center; width: 68px; padding-top: 1px; font: 12px/18px "Noto Sans", sans-serif; color: #fff; }
.desk { width: 13px; margin-right: 2px; border: 1px solid #8496ae; background: linear-gradient(160deg, #9fb0c4, #24456f 60%); }
```
